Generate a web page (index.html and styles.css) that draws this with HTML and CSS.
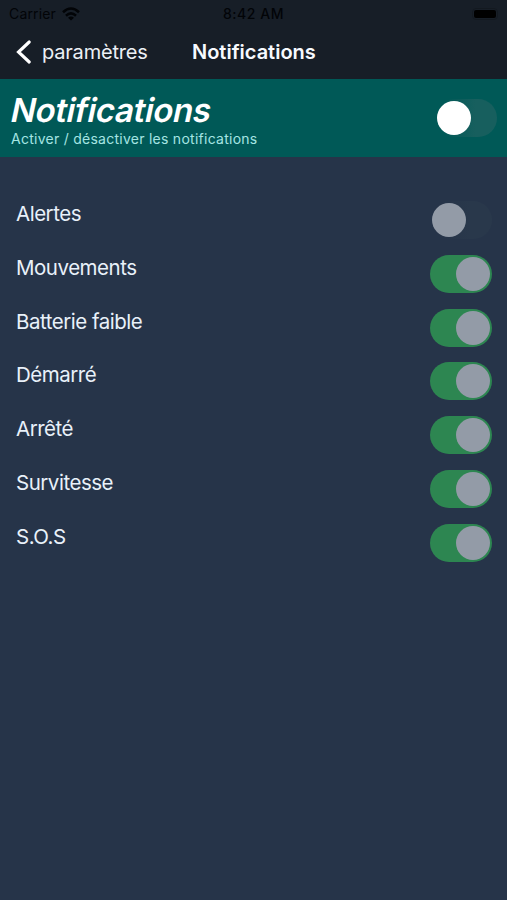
FILE: index.html
```html
<!DOCTYPE html>
<html lang="fr">
<head>
<meta charset="utf-8">
<title>Notifications</title>
<link rel="stylesheet" href="styles.css">
</head>
<body>
<header class="top">
  <div class="status">
    <div class="carrier"><span>Carrier</span>
      <svg width="18" height="14" viewBox="0 0 18 14"><g fill="none" stroke="#020407" stroke-width="2.6"><path d="M1 5.2Q9-2.2 17 5.2"/><path d="M4 8.7Q9 4.2 14 8.7"/></g><path d="M6 10.7Q9 8.2 12 10.7L9 13.5Z" fill="#020407"/></svg>
    </div>
    <time class="time">8:42 AM</time>
    <div class="battery"><i></i></div>
  </div>
  <nav class="nav">
    <a class="back"><svg width="16" height="24" viewBox="0 0 16 24"><path d="M13.2 2L2.5 12L13.2 22" fill="none" stroke="#fff" stroke-width="3.1" stroke-linecap="round" stroke-linejoin="miter"/></svg><span>paramètres</span></a>
    <h1 class="nav-title">Notifications</h1>
  </nav>
</header>
<section class="banner">
  <div>
    <h2 class="title">Notifications</h2>
    <p class="subtitle">Activer / désactiver les notifications</p>
  </div>
  <span class="toggle off"><i class="knob"></i></span>
</section>
<main class="list">
  <div class="row"><span>Alertes</span><span class="toggle off dim"><i class="knob"></i></span></div>
  <div class="row"><span>Mouvements</span><span class="toggle on dim"><i class="knob"></i></span></div>
  <div class="row"><span>Batterie faible</span><span class="toggle on dim"><i class="knob"></i></span></div>
  <div class="row"><span>Démarré</span><span class="toggle on dim"><i class="knob"></i></span></div>
  <div class="row"><span>Arrêté</span><span class="toggle on dim"><i class="knob"></i></span></div>
  <div class="row"><span>Survitesse</span><span class="toggle on dim"><i class="knob"></i></span></div>
  <div class="row"><span>S.O.S</span><span class="toggle on dim"><i class="knob"></i></span></div>
</main>
</body>
</html>
```
FILE: styles.css
```css
* { box-sizing: border-box; }
body {
  margin: 0;
  height: 900px;
  overflow: hidden;
  background: #263449;
  color: #e9f1fa;
  font-family: Inter, "Liberation Sans", sans-serif;
}
h1, h2, p { margin: 0; }
svg { display: block; flex: none; }
.top { height: 79px; background: #171e27; }
.status {
  display: grid;
  grid-template-columns: 1fr auto 1fr;
  align-items: center;
  height: 27px;
  padding: 0 9px 0 9px;
  color: #020407;
  font-size: 14px;
}
.carrier { display: flex; gap: 6px; align-items: center; letter-spacing: .15px; }
.time { font-weight: 500; letter-spacing: .55px; }
.battery { justify-self: end; width: 26px; height: 12px; border: 1px solid #131920; border-radius: 4px; padding: 1px; }
.battery i { display: block; height: 8px; border-radius: 2px; background: #000; }
.nav { display: grid; grid-template-columns: 176px 1fr; align-items: center; height: 50px; padding-left: 16px; }
.back { display: flex; align-items: center; gap: 10px; font-size: 20px; letter-spacing: -.2px; color: #edf1f6; }
.nav-title { font-size: 20px; font-weight: 600; letter-spacing: 0; color: #f7faff; }
.banner {
  display: flex;
  justify-content: space-between;
  height: 78px;
  padding: 10px 10px 0 10px;
  background: #005957;
}
.title { font-size: 33px; line-height: 42px; font-weight: 600; letter-spacing: -.35px; color: #fff; transform: skewX(-12deg); transform-origin: 0 68%; }
.subtitle { margin-top: -2px; padding-left: 1px; font-size: 14px; line-height: 19px; letter-spacing: .26px; color: #a5e5e3; }
.banner .toggle { margin-top: 10px; }
.list { padding: 44px 15px 0 16px; }
.row { display: flex; justify-content: space-between; height: 53.75px; font-size: 20.5px; line-height: 26px; letter-spacing: -.48px; }
.toggle { display: flex; flex: none; width: 62px; height: 38px; padding: 2px; border-radius: 19px; }
.knob { width: 34px; height: 34px; border-radius: 50%; background: #fff; }
.off { background: linear-gradient(90deg, #005957 15%, #175f5e 65%); }
.on { justify-content: flex-end; background: #2d8651; }
.dim .knob { background: #939ba7; }
.off.dim { background: linear-gradient(90deg, #263449 15%, #29384b 65%); }
```
